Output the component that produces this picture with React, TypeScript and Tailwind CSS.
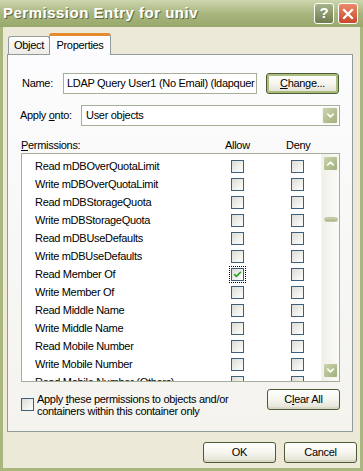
import { Check, ChevronDown, ChevronUp } from 'lucide-react';

const rows = [
  { label: 'Read mDBOverQuotaLimit', allow: false },
  { label: 'Write mDBOverQuotaLimit', allow: false },
  { label: 'Read mDBStorageQuota', allow: false },
  { label: 'Write mDBStorageQuota', allow: false },
  { label: 'Read mDBUseDefaults', allow: false },
  { label: 'Write mDBUseDefaults', allow: false },
  { label: 'Read Member Of', allow: true },
  { label: 'Write Member Of', allow: false },
  { label: 'Read Middle Name', allow: false },
  { label: 'Write Middle Name', allow: false },
  { label: 'Read Mobile Number', allow: false },
  { label: 'Write Mobile Number', allow: false },
  { label: 'Read Mobile Number (Others)', allow: false },
];

function XpCheck({ checked = false, focus = false }: { checked?: boolean; focus?: boolean }) {
  return (
    <div
      className={`w-[13px] h-[13px] shrink-0 border border-[#3E5E7C] bg-gradient-to-br from-[#DCDCD6] to-[#FFFFFF] flex items-center justify-center ${
        focus ? 'outline outline-1 outline-dotted outline-black outline-offset-[1px]' : ''
      }`}
    >
      {checked && <Check className="w-[9px] h-[9px] text-[#21A121]" strokeWidth={4} />}
    </div>
  );
}

function XpButton({ children, isDefault = false }: { children: React.ReactNode; isDefault?: boolean }) {
  return (
    <button
      className={`w-[73px] h-[21px] shrink-0 rounded-[3px] border border-[#4E5A36] bg-gradient-to-b from-[#FFFFFF] via-[#F6F5EE] to-[#E2E0D2] text-[11px] text-black flex items-center justify-center ${
        isDefault ? 'shadow-[inset_0_0_0_2px_#A9BD7C]' : 'shadow-[inset_0_-2px_0_#DAD8C6]'
      }`}
    >
      {children}
    </button>
  );
}

function ScrollBtn({ down = false }: { down?: boolean }) {
  return (
    <div className="w-[15px] h-[15px] rounded-[2px] border border-[#F4F5EC] bg-gradient-to-br from-[#CAD4AC] to-[#A2AF7E] flex items-center justify-center">
      {down ? (
        <ChevronDown className="w-[11px] h-[11px] text-white" strokeWidth={3.5} />
      ) : (
        <ChevronUp className="w-[11px] h-[11px] text-white" strokeWidth={3.5} />
      )}
    </div>
  );
}

export default function App() {
  return (
    <div className="w-[363px] h-[471px] flex flex-col bg-[#A9B77F] [font-family:'Liberation_Sans',Arial,sans-serif] text-[11px] tracking-[-0.3px] text-black overflow-hidden">
      {/* Title bar */}
      <div className="h-[27px] shrink-0 flex items-center justify-between pl-[3px] pr-[5px] bg-gradient-to-b from-[#CDD6AE] via-[#A8B67E] to-[#98A76B]">
        <span className="text-[15px] font-bold text-white tracking-[0.5px] [text-shadow:1px_1px_0_#5F6A42]">
          Permission Entry for univ
        </span>
        <div className="flex items-center gap-[4px]">
          <div className="w-[20px] h-[21px] rounded-[3px] border border-white bg-gradient-to-b from-[#A7B48A] to-[#6F7D50] flex items-center justify-center text-white text-[15px] font-bold">
            ?
          </div>
          <div className="w-[20px] h-[21px] rounded-[3px] border border-white bg-gradient-to-b from-[#E98A6A] to-[#C9462A] flex items-center justify-center">
            <svg width="12" height="12" viewBox="0 0 12 12">
              <path d="M2 2 L10 10 M10 2 L2 10" stroke="white" strokeWidth="2.2" strokeLinecap="square" />
            </svg>
          </div>
        </div>
      </div>

      {/* Body */}
      <div className="flex-1 mx-[3px] mb-[3px] bg-[#ECE9D8] flex flex-col">
        {/* Tabs */}
        <div className="h-[21px] mt-[6px] ml-[5px] flex items-end relative z-10">
          <div className="w-[42px] h-[18px] border border-b-0 border-[#919B9C] rounded-t-[3px] bg-gradient-to-b from-white to-[#ECEBE6] flex items-center justify-center">
            Object
          </div>
          <div className="w-[62px] h-[22px] -ml-[1px] -mb-[1px] border-x border-[#919B9C] border-t-[3px] border-t-[#E68B2C] rounded-t-[3px] bg-[#FCFCFE] flex items-center justify-center">
            Properties
          </div>
        </div>

        {/* Panel */}
        <div className="ml-[4px] w-[346px] h-[378px] border border-[#919B9C] bg-gradient-to-b from-[#FCFCFE] to-[#F4F3EE] flex flex-col pl-[13px]">
          <div className="mt-[18px] flex items-center h-[21px]">
            <span className="w-[42px] pl-[1px]">Name:</span>
            <div className="w-[194px] h-[21px] border border-[#A5AF98] bg-white flex items-center px-[3px] whitespace-nowrap overflow-hidden">
              LDAP Query User1 (No Email) (ldapquer
            </div>
            <div className="ml-[9px]">
              <XpButton isDefault>
                <span>
                  <u>C</u>hange...
                </span>
              </XpButton>
            </div>
          </div>

          <div className="mt-[11px] flex items-center h-[21px]">
            <span className="w-[61px] -ml-[1px]">
              Apply <u>o</u>nto:
            </span>
            <div className="w-[259px] h-[21px] border border-[#A5AF98] bg-white flex items-center justify-between pl-[4px] pr-[1px]">
              <span>User objects</span>
              <div className="w-[16px] h-[17px] rounded-[2px] border border-[#F4F5EC] bg-gradient-to-br from-[#CAD4AC] to-[#A2AF7E] flex items-center justify-center">
                <ChevronDown className="w-[11px] h-[11px] text-white" strokeWidth={3.5} />
              </div>
            </div>
          </div>

          <div className="mt-[13px] h-[13px] flex items-center">
            <span className="w-[204px]">
              <u>P</u>ermissions:
            </span>
            <span className="w-[61px]">Allow</span>
            <span>Deny</span>
          </div>

          {/* Permission list */}
          <div className="mt-[1px] w-[319px] h-[229px] border border-[#A5AF98] bg-white flex overflow-hidden">
            <div className="flex-1 pt-[3px] overflow-hidden">
              {rows.map((r) => (
                <div key={r.label} className="h-[18px] flex items-center pl-[13px]">
                  <span className="w-[196px] whitespace-nowrap">{r.label}</span>
                  <div className="w-[60px]">
                    <XpCheck checked={r.allow} focus={r.allow} />
                  </div>
                  <XpCheck />
                </div>
              ))}
            </div>
            <div className="w-[18px] border-l border-[#F6F5EF] bg-gradient-to-r from-[#F0EFE7] to-[#FBFBF8] flex flex-col items-center pt-[2px] pb-[3px]">
              <ScrollBtn />
              <div className="flex-1 w-full flex flex-col items-center">
                <div className="mt-[46px] w-[14px] h-[5px] rounded-[3px] bg-gradient-to-b from-[#CBD4AE] to-[#A5B283] border border-[#C0C9A2]" />
              </div>
              <ScrollBtn down />
            </div>
          </div>

          <div className="mt-[7px] flex items-start">
            <div className="mt-[9px]">
              <XpCheck />
            </div>
            <div className="ml-[3px] mt-[4px] w-[226px] leading-[12px]">
              <div>
                Apply <u>t</u>hese permissions to objects and/or
              </div>
              <div>containers within this container only</div>
            </div>
            <div className="ml-[4px]">
              <XpButton>
                <span>
                  C<u>l</u>ear All
                </span>
              </XpButton>
            </div>
          </div>
        </div>

        {/* Footer buttons */}
        <div className="mt-[10px] flex justify-end gap-[8px] pr-[3px]">
          <XpButton>OK</XpButton>
          <XpButton>Cancel</XpButton>
        </div>
      </div>
    </div>
  );
}
